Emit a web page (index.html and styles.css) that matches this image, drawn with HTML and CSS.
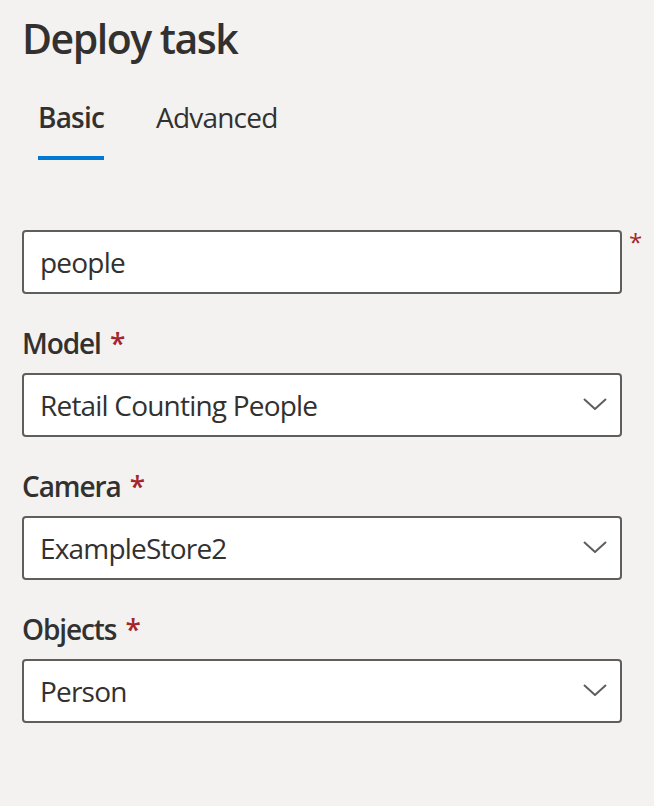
FILE: index.html
```html
<!DOCTYPE html>
<html lang="en">
<head>
<meta charset="utf-8">
<title>Deploy task</title>
<link rel="stylesheet" href="styles.css">
</head>
<body>
<div class="panel">
  <h1 class="title">Deploy task</h1>
  <div class="tabs">
    <button class="tab active"><span class="tab-label">Basic</span></button>
    <button class="tab"><span class="tab-label">Advanced</span></button>
  </div>
  <div class="form">
    <div class="field-row">
      <div class="input">people</div>
      <span class="req req-side">*</span>
    </div>
    <div class="field">
      <div class="label">Model <span class="req">*</span></div>
      <div class="input dropdown"><span>Retail Counting People</span>
        <svg class="chev" width="24" height="12" viewBox="0 0 24 12"><polyline points="1,1 12,11 23,1" fill="none" stroke="#605e5c" stroke-width="2"/></svg>
      </div>
    </div>
    <div class="field">
      <div class="label">Camera <span class="req">*</span></div>
      <div class="input dropdown"><span>ExampleStore2</span>
        <svg class="chev" width="24" height="12" viewBox="0 0 24 12"><polyline points="1,1 12,11 23,1" fill="none" stroke="#605e5c" stroke-width="2"/></svg>
      </div>
    </div>
    <div class="field">
      <div class="label">Objects <span class="req">*</span></div>
      <div class="input dropdown"><span>Person</span>
        <svg class="chev" width="24" height="12" viewBox="0 0 24 12"><polyline points="1,1 12,11 23,1" fill="none" stroke="#605e5c" stroke-width="2"/></svg>
      </div>
    </div>
  </div>
</div>
</body>
</html>
```

FILE: styles.css
```css
html, body {
  margin: 0;
  padding: 0;
  background: #f3f2f1;
}
body {
  font-family: "Open Sans", "Noto Sans", sans-serif;
  color: #323130;
}
.panel {
  padding: 10px 0 0 22px;
  width: 632px;
}
.title {
  margin: 0;
  font-size: 41px;
  line-height: 56px;
  font-weight: 600;
  letter-spacing: -1.5px;
}
.tabs {
  display: flex;
  margin-top: 31px;
}
.tab {
  border: 0;
  background: transparent;
  padding: 0 16px;
  margin-right: 20px;
  font-family: inherit;
  font-size: 28px;
  line-height: 40px;
  color: #323130;
  cursor: pointer;
}
.tab-label {
  display: block;
  padding-bottom: 19px;
  border-bottom: 4px solid transparent;
  letter-spacing: -0.8px;
}
.tab.active .tab-label {
  font-weight: 600;
  border-bottom-color: #0078d4;
}
.form {
  margin-top: 70px;
  display: flex;
  flex-direction: column;
  gap: 19px;
}
.field-row {
  display: flex;
  align-items: flex-start;
}
.req {
  color: #a4262c;
  font-weight: 600;
  letter-spacing: 0;
  margin-left: 3px;
}
.req-side {
  font-size: 24px;
  line-height: 24px;
  font-weight: 400;
  margin-left: 7px;
}
.label {
  font-size: 28px;
  line-height: 40px;
  font-weight: 600;
  padding: 10px 0;
  letter-spacing: -1.1px;
}
.input {
  box-sizing: border-box;
  width: 600px;
  height: 64px;
  border: 2px solid #605e5c;
  border-radius: 4px;
  background: #fff;
  padding: 1px 13px 0 16px;
  font-size: 28px;
  line-height: 59px;
  letter-spacing: -0.8px;
  white-space: nowrap;
}
.dropdown {
  display: flex;
  align-items: center;
  justify-content: space-between;
}
.chev {
  display: block;
  margin-top: -3px;
}
```
